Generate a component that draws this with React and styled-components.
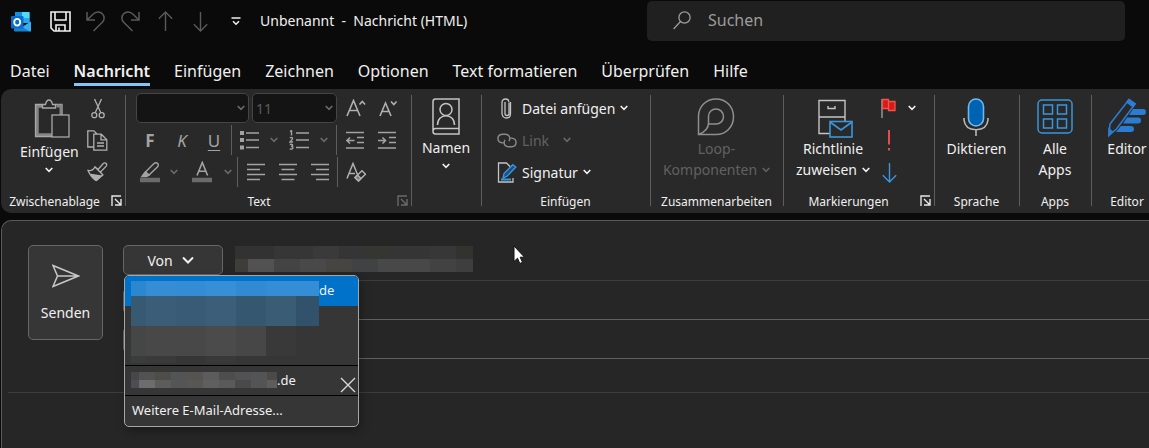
import React from 'react';
import styled, { createGlobalStyle, css } from 'styled-components';

const GlobalStyle = createGlobalStyle`
  * { box-sizing: border-box; }
  html, body { margin: 0; background: #0a0a0a; }
  body {
    font-family: "Segoe UI", "Noto Sans", "Open Sans", sans-serif;
    font-size: 14px;
    color: #f0f0f0;
    overflow: hidden;
  }
  button, input, select { font: inherit; color: inherit; }
  button { background: none; border: 0; padding: 0; margin: 0; }
  svg { display: block; flex: none; }
`;

const Window = styled.div`
  display: flex;
  flex-direction: column;
  min-height: 100vh;
`;

/* ---------- title bar ---------- */
const TitleBar = styled.header`
  display: flex;
  align-items: center;
  height: 42px;
  padding: 0 24px 0 10px;
`;
const QuickAccess = styled.div`
  display: flex;
  align-items: center;
  gap: 12px;
  margin-left: 18px;
`;
const QuickButton = styled.button`
  display: grid;
  place-items: center;
  width: 23px;
  height: 24px;
`;
const WindowTitle = styled.h1`
  margin: 0 auto 0 13px;
  font-size: 14px;
  font-weight: 400;
  line-height: 20px;
  white-space: pre;
`;
const SearchBox = styled.label`
  display: flex;
  align-items: center;
  gap: 17px;
  flex: 0 1 478px;
  height: 40px;
  padding: 0 26px 2px;
  border-radius: 5px;
  background: #202020;
  color: #9c9c9c;
`;
const SearchInput = styled.input`
  flex: 1;
  min-width: 0;
  height: 24px;
  padding: 0;
  border: 0;
  outline: 0;
  background: transparent;
  font-size: 16px;
  &::placeholder { color: #9c9c9c; opacity: 1; }
`;

/* ---------- tabs ---------- */
const Tabs = styled.nav`
  display: flex;
  align-items: flex-end;
  gap: 24px;
  height: 47px;
  padding: 0 10px 3px;
`;
const Tab = styled.a`
  color: #f0f0f0;
  font-size: 16px;
  line-height: 24px;
  font-weight: ${p => (p.$active ? 600 : 400)};
  text-decoration: none;
  white-space: nowrap;
  border-bottom: 3px solid ${p => (p.$active ? '#83c5fb' : 'transparent')};
`;

/* ---------- ribbon ---------- */
const Ribbon = styled.section`
  display: flex;
  height: 124px;
  margin-left: 1px;
  padding: 3px 0 1px;
  border-radius: 10px 0 0 10px;
  background: #292929;
  overflow: hidden;
`;
const Group = styled.div`
  position: relative;
  display: grid;
  grid-template-rows: 96px 1fr;
  flex: 0 0 ${p => p.$width}px;
  padding-right: 2px;
  background: linear-gradient(#5e5e5e, #5e5e5e) right 3px / 1px 111px no-repeat;
`;
const GroupBody = styled.div`
  display: flex;
  justify-content: ${p => p.$justify || 'center'};
  padding: ${p => p.$padding || '0'};
`;
const GroupFooter = styled.div`
  display: flex;
  align-items: center;
  justify-content: center;
  font-size: 12px;
  line-height: 16px;
  padding-top: 3px;
  padding-right: ${p => p.$shift || 0}px;
`;
const LauncherButton = styled.button`
  position: absolute;
  right: 4px;
  bottom: 6px;
  color: ${p => (p.$disabled ? '#6a6a6a' : '#e6e6e6')};
`;
const Stack = styled.div`
  display: flex;
  flex-direction: column;
`;
const ToolRow = styled.div`
  display: flex;
  align-items: center;
  height: 32px;
  padding-left: ${p => p.$indent || 0}px;
`;
const LargeButton = styled.button`
  display: flex;
  flex-direction: column;
  align-items: center;
  padding-top: 6px;
  line-height: 21px;
  white-space: nowrap;
  color: ${p => (p.disabled ? '#616161' : '#f0f0f0')};
`;
const LargeLabel = styled.span`
  display: flex;
  align-items: center;
  gap: 5px;
`;
const ChevronSlot = styled.span`
  display: grid;
  place-items: center;
  height: 16px;
`;
const ToolButton = styled.button`
  display: grid;
  place-items: center;
  width: ${p => p.$width || 32}px;
  height: 28px;
  color: ${p => p.$color || '#a3a3a3'};
`;
const Letter = styled(ToolButton)`
  font-size: 17px;
  ${p => p.$kind === 'bold' && css`font-weight: 700;`}
  ${p => p.$kind === 'italic' && css`font-style: italic;`}
  ${p => p.$kind === 'underline' && css`text-decoration: underline; text-underline-offset: 3px;`}
`;
const Divider = styled.span`
  width: 1px;
  height: 30px;
  margin: 0 ${p => p.$right || 2}px 0 ${p => p.$left || 1}px;
  background: #5e5e5e;
`;
const ComboBox = styled.button`
  display: flex;
  align-items: center;
  justify-content: space-between;
  width: ${p => p.$width}px;
  height: 30px;
  padding: 0 3px;
  border: 1px solid #454545;
  border-radius: 5px;
  background: #141414;
  color: #5c5c5c;
  margin-right: 3px;
`;
const LineButton = styled.button`
  display: flex;
  align-items: center;
  gap: 5px;
  height: 32px;
  white-space: nowrap;
  color: ${p => (p.disabled ? '#616161' : '#f0f0f0')};
`;
const LineLabel = styled.span`
  margin-right: ${p => p.$gap || 0}px;
`;

/* ---------- message ---------- */
const Message = styled.main`
  position: relative;
  flex: 1;
  margin: 7px 0 0 1px;
  padding-top: 24px;
  border: 1px solid #5a5a5a;
  border-width: 1px 0 0 1px;
  border-radius: 10px 0 0 0;
  background: #262626;
`;
const Header = styled.div`
  display: flex;
  gap: 20px;
  padding-left: 26px;
`;
const SendButton = styled.button`
  display: flex;
  flex-direction: column;
  align-items: center;
  gap: 15px;
  width: 75px;
  height: 95px;
  padding-top: 18px;
  border: 1px solid #666;
  border-radius: 5px;
  background: #363636;
  line-height: 20px;
`;
const Fields = styled.div`
  flex: 1;
`;
const FieldRow = styled.div`
  position: relative;
  display: flex;
  align-items: ${p => (p.$first ? 'flex-start' : 'center')};
  gap: 12px;
  height: ${p => (p.$first ? 36 : 39)}px;
`;
const FieldButton = styled.button`
  display: flex;
  align-items: center;
  justify-content: center;
  gap: 9px;
  width: 100px;
  height: ${p => p.$height || 26}px;
  padding-right: 5px;
  border: 1px solid #666;
  border-radius: 5px;
  background: #363636;
`;
const FieldValue = styled.div`
  flex: 1;
  align-self: stretch;
  padding-top: 1px;
  border-bottom: 1px solid ${p => (p.$soft ? '#3c3c3c' : '#606060')};
`;
const SubjectRow = styled.div`
  height: 34px;
  margin-left: 6px;
  border-bottom: 1px solid #3c3c3c;
`;
const Menu = styled.div`
  position: absolute;
  top: 30px;
  left: 1px;
  z-index: 2;
  width: 235px;
  border: 1px solid #a6a6a6;
  border-radius: 5px;
  background: #363636;
  box-shadow: 2px 4px 10px rgba(0, 0, 0, 0.3);
  font-size: 13px;
  line-height: 16px;
  overflow: hidden;
`;
const MenuItem = styled.button`
  position: relative;
  display: flex;
  align-items: flex-start;
  width: 100%;
  height: 30px;
  padding: 6px 2px 0 ${p => p.$indent || 6}px;
  text-align: left;
  background: ${p => (p.$selected ? '#0072c9' : 'transparent')};
  border-bottom: ${p => (p.$ruled ? '1px solid #000' : '0')};
`;
const MenuMosaic = styled.div`
  position: absolute;
  top: 5px;
  left: 6px;
  z-index: 1;
`;
const RemoveIcon = styled.span`
  margin: 5px 0 0 auto;
`;
const Pointer = styled.svg`
  position: absolute;
  top: 24px;
  left: 511px;
`;

/* ---------- drawings ---------- */
const Icon = ({ w = 20, h = w, sw = 1.3, children, ...rest }) => (
  <svg width={w} height={h} viewBox={`0 0 ${w} ${h}`} fill="none" stroke="currentColor" strokeWidth={sw} aria-hidden="true" {...rest}>
    {children}
  </svg>
);
const Chevron = ({ big, color }) => big
  ? <Icon w={12} h={8} sw={2} color={color}><path d="M1 1.500 6 6.500 11 1.500" /></Icon>
  : <Icon w={8} h={6} sw={1.6} color={color}><path d="M.7 1 4 4.300 7.300 1" /></Icon>;

const Mosaic = ({ width, height, rows }) => (
  <svg width={width} height={height} shapeRendering="crispEdges" aria-hidden="true">
    {rows.map(row => row.cells.map(([x, w, fill]) => (
      <rect key={`${row.y}-${x}`} x={x} y={row.y} width={w} height={row.h} fill={fill} />
    )))}
  </svg>
);

const senderRows = [
  { y: 0, h: 13, cells: [[0, 39, '#323232'], [39, 39, '#363636'], [78, 26, '#3a3a3a'], [104, 26, '#353535'], [130, 26, '#353532'], [156, 39, '#353535'], [195, 26, '#373737'], [221, 17, '#32322f']] },
  { y: 13, h: 13, cells: [[0, 13, '#3e3d3a'], [13, 26, '#525252'], [39, 26, '#444444'], [65, 26, '#494949'], [91, 26, '#464541'], [117, 26, '#404244'], [143, 52, '#484848'], [195, 26, '#424242'], [221, 17, '#3e3e3e']] },
];
const accountRows = [
  { y: 0, h: 15, cells: [[0, 15, '#2b87d0'], [15, 30, '#368dd4'], [45, 30, '#338cd4'], [75, 30, '#378fd6'], [105, 30, '#328bd2'], [135, 53, '#358ed5']] },
  { y: 15, h: 30, cells: [[0, 15, '#375a72'], [15, 30, '#3c5d77'], [45, 30, '#395b75'], [75, 30, '#3c5e78'], [105, 30, '#355870'], [135, 30, '#3b5c75'], [165, 23, '#31526a']] },
  { y: 45, h: 30, cells: [[0, 15, '#454746'], [15, 60, '#484848'], [75, 30, '#4b4b4b'], [105, 30, '#474747'], [135, 30, '#393939']] },
  { y: 75, h: 7, cells: [[0, 15, '#3b3c3e'], [15, 30, '#3a3a3a'], [75, 30, '#393939']] },
];
const secondRows = [
  { y: 0, h: 8, cells: [[0, 8, '#474649'], [8, 16, '#525252'], [24, 16, '#4e4d4a'], [40, 16, '#535456'], [56, 16, '#565451'], [72, 16, '#5b5c5b'], [88, 16, '#4e4e4e'], [104, 16, '#525252'], [120, 16, '#535456'], [136, 10, '#4b4a47']] },
  { y: 8, h: 8, cells: [[0, 8, '#4e4d53'], [8, 16, '#6d6d6e'], [24, 16, '#5d5c59'], [40, 16, '#535557'], [56, 16, '#585753'], [72, 16, '#5d605e'], [88, 16, '#5b5a57'], [104, 16, '#4a4a4d'], [120, 16, '#545456'], [136, 10, '#5d5d5a']] },
];

const OutlookLogo = () => (
  <svg width="21" height="21" viewBox="0 0 21 21" aria-hidden="true">
    <path d="M5 1.500Q5 1 6 1h12.500q1 0 1 1v10H5z" fill="#28a8ea" />
    <path d="M5 1h7v6H5z" fill="#1490df" />
    <path d="M12 1h7.500v6H12z" fill="#50d9ff" />
    <path d="M12 7h7.500v5H12z" fill="#2aa6ec" />
    <path d="M4 11.500 12.500 16 21 10.500V19.500q0 1-1 1H5q-1 0-1-1z" fill="#1a7fd0" />
    <path d="M21 10.500 12 16l8 4.500q1 0 1-1z" fill="#36b0f0" />
    <rect x="1" y="5" width="12.500" height="12.500" rx="1" fill="#0a6ccb" />
    <ellipse cx="7.200" cy="11.200" rx="3" ry="3.300" fill="none" stroke="#fff" strokeWidth="1.900" />
  </svg>
);
const SaveIcon = () => (
  <Icon w={21} sw={1.6} color="#f2f2f2">
    <path d="M1 1h19v19H4L1 17zM5 1v8h11V1M6 20v-6h9v6M9 16.500V20" />
  </Icon>
);
const UndoIcon = ({ flip }) => (
  <Icon w={19} h={21} color="#5a5a5a" sw={1.5}>
    <path transform={flip ? 'matrix(-1 0 0 1 19 0)' : undefined} d="M1 1v8h8M1.500 8.500 7 3.200C10 .2 14 .4 16.300 2.700c2.400 2.500 2.400 6.200 0 8.600L7.500 20" />
  </Icon>
);
const ArrowIcon = ({ up, w = 15, color }) => (
  <Icon w={w} h={21} color={color} sw={1.4}>
    <path d={up ? 'M7.500 1v19M.8 7.700 7.500 1l6.700 6.700' : 'M7.500 1v19M.8 13.300 7.500 20l6.700-6.700'} />
  </Icon>
);
const CustomizeIcon = () => <Icon w={10} h={10} sw={1.5} color="#f0f0f0"><path d="M.5 2h9M2 5.300l3 3 3-3" /></Icon>;
const SearchIcon = () => <Icon w={18} h={19}><circle cx="11.500" cy="6.500" r="5.600" /><path d="M7.500 10.500.6 18" /></Icon>;

const PasteIcon = () => (
  <Icon w={42} h={43} viewBox="-6 -1 42 43" color="#a8a8a8" sw={1.3}>
    <path d="M8 7H3v29h16" strokeWidth="3.500" stroke="#858585" />
    <path d="M8 5.500H1.500v32H18M22 5.500h6V17" />
    <path d="M22.500 7H27v9" strokeWidth="3" stroke="#858585" />
    <path d="M8.500 9V5.500h3C12 3 13.500 1 15 1s3 2 3.500 4.500h3V9z" fill="#292929" />
    <rect x="18" y="16" width="17" height="22" fill="#292929" />
  </Icon>
);
const CutIcon = () => (
  <Icon w={14} h={21} color="#b0b0b0"><path d="M3.500 1l6.200 13.500M10.500 1 4.300 14.500" /><circle cx="3.300" cy="17.200" r="2.500" /><circle cx="10.700" cy="17.200" r="2.500" /></Icon>
);
const CopyIcon = () => (
  <Icon w={21} color="#b0b0b0"><path d="M7 17H.8V.8h6l3 3M6.800 4.200h7.500l5.500 5.500v10.500h-13zM14 4.500v5.300h5.500M10 13h7M10 16h7" /></Icon>
);
const BrushIcon = () => (
  <Icon w={21} color="#b0b0b0"><path d="M1 8.500c4 .8 6-1.500 7-3.700l3 2.700 5.500-6.200q1.500-1 2.700.2 1 1.300 0 2.600l-5.700 6 2.400 2.900-6.500 5.500C6 17 3 13 1 8.500zM8 5l8 8" /><path d="M4 12.500 14 14l-4.800 4.400C7 17 5 15 4 12.500z" fill="#b0b0b0" /></Icon>
);
const Launcher = () => <Icon w={11} sw={1.4}><path d="M1 11V1h9M4 4l5.500 5.500M10 4v6H4" /></Icon>;

const ResizeFont = ({ grow }) => (
  <Icon w={20} h={18} color="#b0b0b0" sw={1.6}>
    {grow ? <path d="M1 17 7.500 1.500 14 17M3.500 11.500h8M13.500 5.500l2.800-3 2.800 3" /> : <path d="M2 17 7.500 4 13 17M4 12.500h7M13 2.500l2.800 3 2.800-3" />}
  </Icon>
);
const HighlightIcon = () => (
  <Icon w={20} h={22} sw={1.4}>
    <path d="M5.500 11 14 2.500q2-1.700 3.700 0 1.300 1.700-.3 3.500L9 14zM5 11.500 2.500 15H7l2-1" /><path d="M5.500 11 2 15.500h4L9 14z" fill="currentColor" /><path d="M0 19h20" stroke="#6b6b6b" strokeWidth="4.500" />
  </Icon>
);
const FontColorIcon = () => (
  <Icon w={20} h={22} sw={1.6}><path d="M5 14.500 10.300 1.500l5.300 13M6.800 10.300h7" /><path d="M0 19h20" stroke="#6b6b6b" strokeWidth="4.500" /></Icon>
);
const BulletIcon = () => (
  <Icon w={20} sw={1.6}><path d="M6 3h13M6 10h13M6 17.500h13" /><path d="M0 3h4M0 10h4M0 17.500h4" strokeWidth="4" /></Icon>
);
const NumberIcon = () => (
  <Icon w={20} sw={1.4}><path d="M7 3h13M7 10h13M7 17.500h13" strokeWidth="1.600" /><path d="M1 1.500 2.500.8v4.700M.8 8q2-1.200 2.700 0 .3 1-2.500 4h3M.8 14.500q3-.8 2.800.8-.2 1-1.600 1.100 2 .1 1.900 1.400-.3 1.800-3.200 1.200" /></Icon>
);
const IndentIcon = ({ out }) => (
  <Icon w={18} h={19} sw={1.6}><path d="M0 1.500h18M11 6.500h7M11 11.500h7M0 17h18" />{out ? <path d="M1 9.500h7.500M4 6.500l-3 3 3 3" /> : <path d="M0 9.500h7.500M4.500 6.500l3 3-3 3" />}</Icon>
);
const AlignIcon = ({ at }) => {
  const x = at === 'left' ? 0 : at === 'center' ? 2.5 : 5;
  return <Icon w={18} h={19} sw={1.6}><path d={`M0 1.500h18M${x} 6.500h13M0 11.500h18M${x} 16.500h13`} /></Icon>;
};
const ClearIcon = () => (
  <Icon w={20} sw={1.5} color="#b0b0b0"><path d="M1 16.500 7 1.500l4.500 11M3 11.500h6" /><path d="M9 15.500 16 8.800l3.500 3.400-7 6.700z" /><path d="M9 15.500 11.500 13l3.500 3.500-2.500 2.400z" fill="#777" /></Icon>
);
const NamesIcon = () => (
  <Icon w={28} h={39} color="#c4c4c4" sw={1.5}>
    <path d="M27 1H3.500Q1 1 1 3.500V33.500Q1 36 3.500 36H27zM27 30.500H3.500Q1 30.500 1 33" /><circle cx="14" cy="11.500" r="6" /><path d="M5.500 27c0-12.500 17-12.500 17 0" />
  </Icon>
);
const ClipIcon = () => (
  <Icon w={20} h={21} color="#c4c4c4"><path d="M13 5v10.500q0 2-2 2t-2-2V4M14.500 4v11.500Q14.500 20 10.500 20T6 15.500V4.500Q6 1 9.500 1T13 4.500" transform="translate(-1)" /></Icon>
);
const LinkIcon = () => (
  <Icon w={20} h={15} viewBox="0 0 21 15" color="#8a8a8a" sw={1.5}><path d="M8 10H5.500Q1 9.500 1 5.500T5.500 1H9q4.500.5 4.500 4.500 0 1.500-1 2.700M13 5h2.500q4.500.5 4.500 4.500T15.500 14H12q-4.500-.5-4.500-4.500 0-1.500 1-2.700" /></Icon>
);
const SignatureIcon = () => (
  <Icon w={20} h={21} color="#c4c4c4"><path d="M10 1H1.500v19H16v-4M9.500 1l4 4" /><path d="m6 16 1-4.500 8.800-8.800 3 2.300-8.500 9z" fill="#1d4f80" stroke="#3a96dd" /><path d="M4 17.500h10" stroke="#3a96dd" strokeWidth="1.800" /></Icon>
);
const LoopIcon = () => (
  <Icon w={38} h={40} color="#8f8f8f" sw={1.5}><path d="M1.500 36.500V18.500C1.500 8.500 9 1 19 1s17.500 7.500 17.500 17.700S29 36.500 19 36.500zM1.500 36.500C8 34 11.500 30 11.500 25v-6.500C11.500 14 15 11 19 11s7.500 3.200 7.500 7.500S23.300 26 19 26h-7.500" /></Icon>
);
const PolicyIcon = () => (
  <Icon w={40} h={40} viewBox="-5 -1 40 40" color="#c4c4c4" sw={1.4}>
    <path d="M12 34.500H1v-33h26V22M1 18h26M10 7v2.500h7V7" /><rect x="12" y="22.500" width="22" height="15.500" fill="#292929" stroke="#3a96dd" strokeWidth="1.600" /><path d="m12 23 11 8 11-8" stroke="#3a96dd" strokeWidth="1.600" />
  </Icon>
);
const FlagIcon = () => (
  <Icon w={16} h={21}><path d="M1 1v19" stroke="#8f8f8f" strokeWidth="1.600" /><path d="M1.500 1.500h6v9h-6zM7.500 3.500H14v9H7.500z" fill="#d81b17" stroke="#ee5350" /></Icon>
);
const ImportantIcon = () => <Icon w={4} h={21} sw={2} color="#ea4a4e"><path d="M2 0v14.500M2 18v2.500" /></Icon>;
const MicIcon = () => (
  <Icon w={26} h={40} color="#b8b8b8" sw={1.6}><rect x="5.500" y="1" width="15" height="27" rx="7.500" fill="#0063b1" stroke="#6cb8f2" /><path d="M1 20v2q1 9.500 12 9.700Q24 31.500 25 22v-2M13 32v6" /></Icon>
);
const AppsIcon = () => (
  <Icon w={36} h={40} color="#3a96dd" sw={1.5}><rect x="1" y="2" width="34" height="33" rx="4" /><path d="M6.500 7h9v9h-9zM20.500 7h9v9h-9zM6.500 21h9v9h-9zM20.500 21h9v9h-9z" /></Icon>
);
const EditorIcon = () => (
  <Icon w={40} h={40} color="#2b7cd3" sw={1.6}>
    <path d="M26 11h10q3 .2 3 3t-3 3H22zM20 19.500h11q3 .2 3 3t-3 3H16zM14 28h10q3 .2 3 3t-3 3H9z" fill="#2b7cd3" stroke="none" />
    <path d="M3 26 22 1.500l6 4.500L9.500 31 2 37z" fill="#292929" /><path d="m20 4 2-2.500 6 4.500-2 2.600zM2 31l3.500 3L2 37.500z" fill="#2b7cd3" />
  </Icon>
);
const SendIcon = () => <Icon w={28} h={24} color="#c8c8c8" sw={1.5}><path d="M1 1.500 26.500 12 1 22.500 5.500 12zM5.500 12h21" /></Icon>;
const CloseIcon = () => <Icon w={16} color="#d8d8d8" sw={1.4}><path d="m1 1 14 14M15 1 1 15" /></Icon>;

const DimChevron = () => <Chevron color="#6a6a6a" />;

const tabs = ['Datei', 'Nachricht', 'Einfügen', 'Zeichnen', 'Optionen', 'Text formatieren', 'Überprüfen', 'Hilfe'];

export default function App() {
  return (
    <Window>
      <GlobalStyle />
      <TitleBar>
        <OutlookLogo />
        <QuickAccess>
          <QuickButton aria-label="Speichern"><SaveIcon /></QuickButton>
          <QuickButton aria-label="Rückgängig"><UndoIcon /></QuickButton>
          <QuickButton aria-label="Wiederholen"><UndoIcon flip /></QuickButton>
          <QuickButton aria-label="Vorheriges Element"><ArrowIcon up color="#5a5a5a" /></QuickButton>
          <QuickButton aria-label="Nächstes Element"><ArrowIcon color="#5a5a5a" /></QuickButton>
          <QuickButton aria-label="Symbolleiste anpassen"><CustomizeIcon /></QuickButton>
        </QuickAccess>
        <WindowTitle>{'Unbenannt  -  Nachricht (HTML)'}</WindowTitle>
        <SearchBox>
          <SearchIcon />
          <SearchInput type="text" placeholder="Suchen" aria-label="Suchen" />
        </SearchBox>
      </TitleBar>

      <Tabs>
        {tabs.map(t => <Tab key={t} href="#" $active={t === 'Nachricht'}>{t}</Tab>)}
      </Tabs>

      <Ribbon>
        <Group $width={125}>
          <GroupBody $justify="flex-start" $padding="0 0 0 19px">
            <LargeButton>
              <PasteIcon />
              <span>Einfügen</span>
              <ChevronSlot><Chevron /></ChevronSlot>
            </LargeButton>
            <Stack>
              <ToolRow><ToolButton $width={38} aria-label="Ausschneiden"><CutIcon /></ToolButton></ToolRow>
              <ToolRow><ToolButton $width={38} aria-label="Kopieren"><CopyIcon /></ToolButton></ToolRow>
              <ToolRow><ToolButton $width={38} aria-label="Format übertragen"><BrushIcon /></ToolButton></ToolRow>
            </Stack>
          </GroupBody>
          <GroupFooter $shift={16}>
            Zwischenablage
            <LauncherButton aria-label="Zwischenablage öffnen"><Launcher /></LauncherButton>
          </GroupFooter>
        </Group>

        <Group $width={286}>
          <GroupBody $justify="flex-start" $padding="0 0 0 8px">
            <Stack>
              <ToolRow $indent={2}>
                <ComboBox $width={113} aria-label="Schriftart"><span /><DimChevron /></ComboBox>
                <ComboBox $width={85} aria-label="Schriftgrad">11<DimChevron /></ComboBox>
                <ToolButton $width={32} aria-label="Schrift vergrößern"><ResizeFont grow /></ToolButton>
                <ToolButton $width={32} aria-label="Schrift verkleinern"><ResizeFont /></ToolButton>
              </ToolRow>
              <ToolRow>
                <Letter $kind="bold">F</Letter>
                <Letter $kind="italic">K</Letter>
                <Letter $kind="underline">U</Letter>
                <Divider />
                <ToolButton aria-label="Aufzählung"><BulletIcon /></ToolButton>
                <ToolButton $width={16} aria-label="Aufzählungsoptionen"><DimChevron /></ToolButton>
                <ToolButton $width={34} aria-label="Nummerierung"><NumberIcon /></ToolButton>
                <ToolButton $width={16} aria-label="Nummerierungsoptionen"><DimChevron /></ToolButton>
                <Divider $left={4} />
                <ToolButton aria-label="Einzug verkleinern"><IndentIcon out /></ToolButton>
                <ToolButton aria-label="Einzug vergrößern"><IndentIcon /></ToolButton>
              </ToolRow>
              <ToolRow>
                <ToolButton aria-label="Texthervorhebung"><HighlightIcon /></ToolButton>
                <ToolButton $width={16} aria-label="Hervorhebungsfarben"><DimChevron /></ToolButton>
                <ToolButton $width={40} aria-label="Schriftfarbe"><FontColorIcon /></ToolButton>
                <ToolButton $width={12} aria-label="Schriftfarben"><DimChevron /></ToolButton>
                <Divider $left={3} />
                <ToolButton aria-label="Linksbündig"><AlignIcon at="left" /></ToolButton>
                <ToolButton aria-label="Zentriert"><AlignIcon at="center" /></ToolButton>
                <ToolButton aria-label="Rechtsbündig"><AlignIcon at="right" /></ToolButton>
                <Divider />
                <ToolButton aria-label="Formatierung löschen"><ClearIcon /></ToolButton>
              </ToolRow>
            </Stack>
          </GroupBody>
          <GroupFooter $shift={18}>
            Text
            <LauncherButton $disabled aria-label="Textoptionen"><Launcher /></LauncherButton>
          </GroupFooter>
        </Group>

        <Group $width={70}>
          <GroupBody>
            <LargeButton>
              <NamesIcon />
              <span>Namen</span>
              <ChevronSlot><Chevron /></ChevronSlot>
            </LargeButton>
          </GroupBody>
        </Group>

        <Group $width={169}>
          <GroupBody $justify="flex-start" $padding="0 0 0 15px">
            <Stack>
              <LineButton><ClipIcon /><LineLabel>Datei anfügen</LineLabel><Chevron /></LineButton>
              <LineButton disabled><LinkIcon /><LineLabel $gap={9}>Link</LineLabel><DimChevron /></LineButton>
              <LineButton><SignatureIcon /><LineLabel>Signatur</LineLabel><Chevron /></LineButton>
            </Stack>
          </GroupBody>
          <GroupFooter>Einfügen</GroupFooter>
        </Group>

        <Group $width={133}>
          <GroupBody>
            <LargeButton disabled>
              <LoopIcon />
              <span>Loop-</span>
              <LargeLabel>Komponenten <Chevron /></LargeLabel>
            </LargeButton>
          </GroupBody>
          <GroupFooter>Zusammenarbeiten</GroupFooter>
        </Group>

        <Group $width={151}>
          <GroupBody $justify="flex-start" $padding="0 0 0 12px">
            <LargeButton>
              <PolicyIcon />
              <span>Richtlinie</span>
              <LargeLabel>zuweisen <Chevron /></LargeLabel>
            </LargeButton>
            <Stack>
              <ToolRow>
                <ToolButton $width={38} aria-label="Zur Nachverfolgung"><FlagIcon /></ToolButton>
                <ToolButton $width={8} $color="#f0f0f0" aria-label="Nachverfolgungsoptionen"><Chevron /></ToolButton>
              </ToolRow>
              <ToolRow><ToolButton $width={38} aria-label="Wichtigkeit: hoch"><ImportantIcon /></ToolButton></ToolRow>
              <ToolRow><ToolButton $width={38} aria-label="Wichtigkeit: niedrig"><ArrowIcon color="#3a96dd" /></ToolButton></ToolRow>
            </Stack>
          </GroupBody>
          <GroupFooter $shift={20}>
            Markierungen
            <LauncherButton aria-label="Markierungsoptionen"><Launcher /></LauncherButton>
          </GroupFooter>
        </Group>

        <Group $width={85}>
          <GroupBody>
            <LargeButton><MicIcon /><span>Diktieren</span></LargeButton>
          </GroupBody>
          <GroupFooter>Sprache</GroupFooter>
        </Group>

        <Group $width={72}>
          <GroupBody>
            <LargeButton><AppsIcon /><span>Alle</span><span>Apps</span></LargeButton>
          </GroupBody>
          <GroupFooter>Apps</GroupFooter>
        </Group>

        <Group $width={72}>
          <GroupBody>
            <LargeButton><EditorIcon /><span>Editor</span></LargeButton>
          </GroupBody>
          <GroupFooter>Editor</GroupFooter>
        </Group>
      </Ribbon>

      <Message>
        <Header>
          <SendButton><SendIcon />Senden</SendButton>
          <Fields>
            <FieldRow $first>
              <FieldButton $height={30}>Von <Chevron big /></FieldButton>
              <FieldValue $soft><Mosaic width={238} height={26} rows={senderRows} /></FieldValue>
              <Menu>
                <MenuMosaic><Mosaic width={188} height={82} rows={accountRows} /></MenuMosaic>
                <MenuItem $selected $indent={194}>de</MenuItem>
                <MenuItem aria-label="Konto 2" />
                <MenuItem $ruled aria-label="Konto 3" />
                <MenuItem $ruled>
                  <Mosaic width={146} height={16} rows={secondRows} />
                  .de
                  <RemoveIcon><CloseIcon /></RemoveIcon>
                </MenuItem>
                <MenuItem $indent={7}>Weitere E-Mail-Adresse...</MenuItem>
              </Menu>
            </FieldRow>
            <FieldRow>
              <FieldButton aria-label="An" />
              <FieldValue />
            </FieldRow>
            <FieldRow>
              <FieldButton aria-label="Cc" />
              <FieldValue />
            </FieldRow>
          </Fields>
        </Header>
        <SubjectRow />
        <Pointer width="12" height="20" viewBox="0 0 12 20" aria-hidden="true">
          <path d="M1 1v15.500l3.500-3.300 2.300 5.300 2.700-1.200-2.300-5.100H11.500z" fill="#fff" stroke="#111" />
        </Pointer>
      </Message>
    </Window>
  );
}
